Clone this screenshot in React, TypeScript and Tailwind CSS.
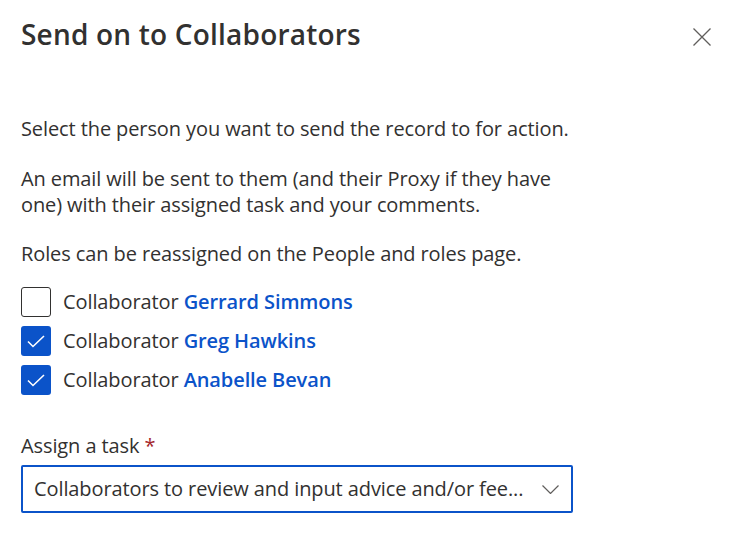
const people = [
  { name: "Gerrard Simmons", checked: false },
  { name: "Greg Hawkins", checked: true },
  { name: "Anabelle Bevan", checked: true },
];

export default function App() {
  return (
    <div className="w-[733px] h-[538px] bg-white text-[#323130] font-['Segoe_UI','Open_Sans',sans-serif]">
      {/* Header */}
      <div className="flex items-start justify-between pl-[21px] pr-[22px] pt-[16px]">
        <h1 className="text-[28px] leading-[36px] font-semibold tracking-[0.2px]">Send on to Collaborators</h1>
        <button className="mt-[12px] text-[#605e5c]">
          <svg width="18" height="18" viewBox="0 0 18 18" fill="none" stroke="currentColor" strokeWidth="1.3">
            <path d="M0.5 0.5 L17.5 17.5 M17.5 0.5 L0.5 17.5" />
          </svg>
        </button>
      </div>

      {/* Body */}
      <div className="pl-[21px] pt-[64px] text-[20px] leading-[26px] tracking-[-0.1px]">
        <p>Select the person you want to send the record to for action.</p>
        <p className="mt-[24px] w-[545px]">
          An email will be sent to them (and their Proxy if they have one) with their assigned task and your comments.
        </p>
        <p className="mt-[23px]">Roles can be reassigned on the People and roles page.</p>

        <div className="mt-[20px] flex flex-col gap-[9px]">
          {people.map((p) => (
            <label key={p.name} className="flex items-center gap-[12px]">
              {p.checked ? (
                <span className="w-[30px] h-[30px] rounded-[3px] bg-[#0b53c9] flex items-center justify-center">
                  <svg width="18" height="13" viewBox="0 0 18 13" fill="none" stroke="white" strokeWidth="1.6">
                    <path d="M1 6.5 L6 11.5 L17 1" />
                  </svg>
                </span>
              ) : (
                <span className="w-[30px] h-[30px] rounded-[3px] border border-[#323130] bg-white" />
              )}
              <span>
                Collaborator <span className="font-semibold text-[#0b53c9]">{p.name}</span>
              </span>
            </label>
          ))}
        </div>

        <div className="mt-[38px]">
          Assign a task <span className="text-[#a4262c]">*</span>
        </div>
        <div className="mt-[6px] w-[552px] h-[48px] border-2 border-[#0b53c9] rounded-[2px] flex items-center justify-between pl-[11px] pr-[12px]">
          <span className="truncate">Collaborators to review and input advice and/or fee...</span>
          <svg width="17" height="9" viewBox="0 0 17 9" fill="none" stroke="#605e5c" strokeWidth="1.2" className="shrink-0">
            <path d="M0.5 0.5 L8.5 8.5 L16.5 0.5" />
          </svg>
        </div>
      </div>
    </div>
  );
}
